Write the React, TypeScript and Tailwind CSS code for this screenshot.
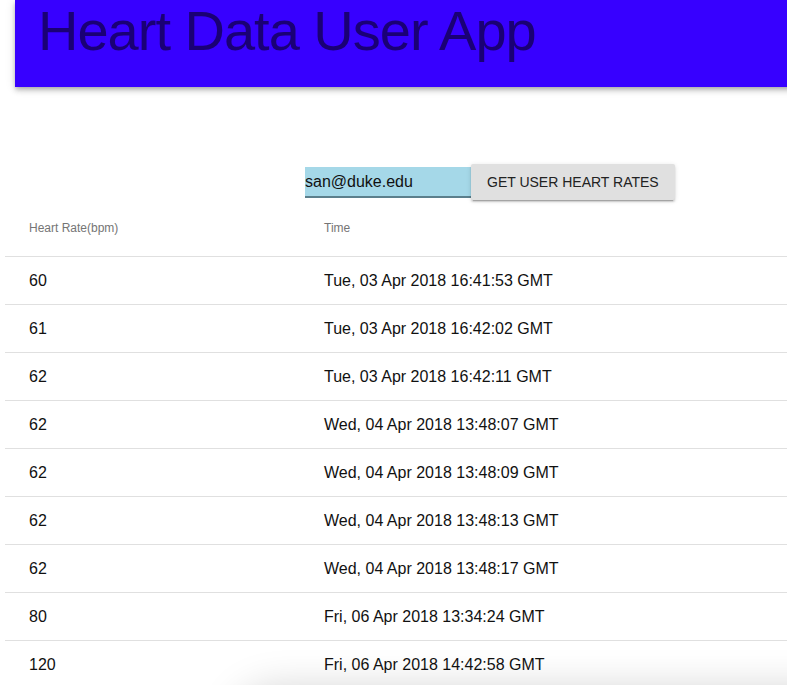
import React from "react";

const rows: [string, string][] = [
  ["60", "Tue, 03 Apr 2018 16:41:53 GMT"],
  ["61", "Tue, 03 Apr 2018 16:42:02 GMT"],
  ["62", "Tue, 03 Apr 2018 16:42:11 GMT"],
  ["62", "Wed, 04 Apr 2018 13:48:07 GMT"],
  ["62", "Wed, 04 Apr 2018 13:48:09 GMT"],
  ["62", "Wed, 04 Apr 2018 13:48:13 GMT"],
  ["62", "Wed, 04 Apr 2018 13:48:17 GMT"],
  ["80", "Fri, 06 Apr 2018 13:34:24 GMT"],
  ["120", "Fri, 06 Apr 2018 14:42:58 GMT"],
];

export default function App() {
  return (
    <div
      className="h-[685px] w-[787px] overflow-hidden bg-white"
      style={{ fontFamily: '"Liberation Sans", Arial, sans-serif' }}
    >
      <header className="ml-[15px] h-[87px] w-[800px] bg-[#3700ff] pl-[23px] pt-[3px] shadow-[0_2px_4px_-1px_rgba(0,0,0,0.2),0_4px_5px_0_rgba(0,0,0,0.14),0_1px_10px_0_rgba(0,0,0,0.12)]">
        <h1 className="text-[56px] leading-[56px] tracking-[-1px] text-[#1a0075]">
          Heart Data User App
        </h1>
      </header>

      <div className="mt-[77px] flex h-[36px] items-center pl-[305px]">
        <div className="flex h-[31px] w-[166px] items-center self-end overflow-hidden border-b-2 border-[#5b7f8c] bg-[#a5d8e8] mb-[2px] text-[16px] text-[#111]">
          san@duke.edu
        </div>
        <button className="h-[36px] w-[204px] rounded-[2px] bg-[#e0e0e0] px-4 text-left text-[14px] text-[#222] shadow-[0_2px_2px_0_rgba(0,0,0,0.14),0_3px_1px_-2px_rgba(0,0,0,0.2),0_1px_5px_0_rgba(0,0,0,0.12)]">
          GET USER HEART RATES
        </button>
      </div>

      <div className="ml-[5px] w-[800px]">
        <div className="flex h-[57px] items-center border-b border-[#e0e0e0] pb-[1px] text-[12px] text-[#757575]">
          <div className="w-[295px] pl-6">Heart Rate(bpm)</div>
          <div className="pl-6">Time</div>
        </div>
        {rows.map(([hr, t], i) => (
          <div
            key={i}
            className="flex h-[48px] items-center border-b border-[#e0e0e0] text-[16px] text-[#111]"
          >
            <div className="w-[295px] pl-6">{hr}</div>
            <div className="pl-6">{t}</div>
          </div>
        ))}
        <div className="ml-[230px] h-[100px] w-[700px] rounded-[40px] bg-white shadow-[0_0_40px_rgba(0,0,0,0.18)]" />
      </div>
    </div>
  );
}
